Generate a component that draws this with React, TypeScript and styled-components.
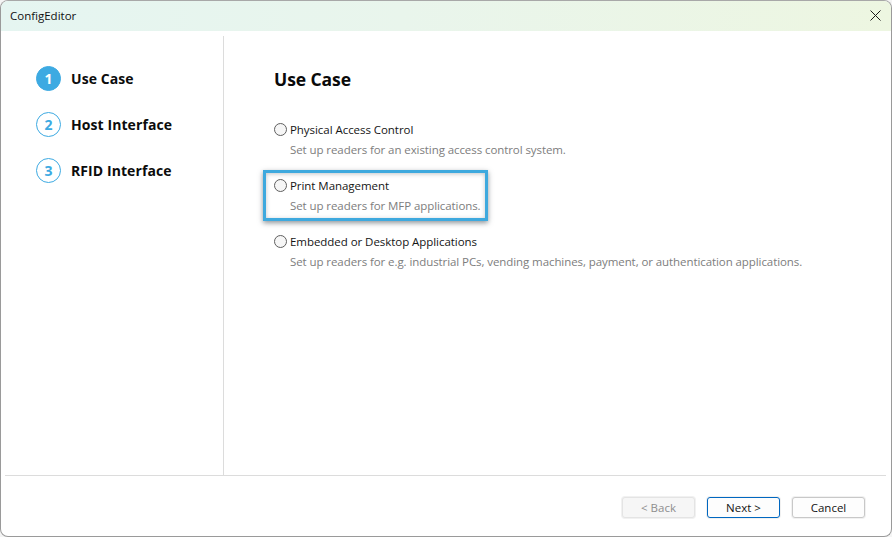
import React from 'react';
import styled, { createGlobalStyle } from 'styled-components';

const GlobalStyle = createGlobalStyle`
  html, body {
    margin: 0;
    padding: 0;
    background: #f4f4f4;
  }
  * {
    box-sizing: border-box;
  }
`;

const Window = styled.div`
  position: relative;
  width: 892px;
  height: 537px;
  display: flex;
  flex-direction: column;
  background: #ffffff;
  border: 1px solid #9a9a9a;
  border-top-color: #a8a8a8;
  border-radius: 8px;
  overflow: hidden;
  font-family: 'Open Sans', 'Noto Sans', sans-serif;
  color: #111111;
`;

const TitleBar = styled.div`
  height: 30px;
  flex: none;
  display: flex;
  align-items: center;
  justify-content: space-between;
  padding: 0 10px 2px 9px;
  background: linear-gradient(90deg, #e5f5f1 0%, #e9f5ec 45%, #edf6e1 100%);
  font-size: 11.5px;
`;

const CloseIcon = styled.svg`
  width: 11px;
  height: 11px;
  display: block;
`;

const Content = styled.div`
  flex: 1;
  display: flex;
  margin: 5px 5px 0 4px;
  min-height: 0;
`;

const Sidebar = styled.nav`
  width: 219px;
  flex: none;
  display: flex;
  flex-direction: column;
  gap: 20px;
  padding: 29px 0 0 31px;
  border-right: 1px solid #dcdcdc;
`;

const Step = styled.div`
  height: 26px;
  display: flex;
  align-items: center;
  gap: 10px;
  font-size: 14px;
  font-weight: 700;
  letter-spacing: 0.08px;
  color: #0c0c0c;
`;

const StepNumber = styled.span<{ $active?: boolean }>`
  width: 25px;
  height: 25px;
  flex: none;
  display: flex;
  align-items: center;
  justify-content: center;
  border-radius: 50%;
  border: 1px solid #3daae2;
  background: ${(p) => (p.$active ? '#3daae2' : '#ffffff')};
  color: ${(p) => (p.$active ? '#ffffff' : '#3daae2')};
  font-size: 14px;
  font-weight: 700;
`;

const Main = styled.main`
  flex: 1;
  padding: 30px 0 0 50px;
`;

const Heading = styled.h1`
  margin: 0 0 27px;
  height: 26px;
  line-height: 26px;
  font-size: 17.5px;
  font-weight: 700;
  letter-spacing: -0.08px;
  color: #0a0a0a;
`;

const OptionList = styled.div`
  display: flex;
  flex-direction: column;
  gap: 16px;
`;

const Option = styled.div`
  position: relative;
  height: 40px;
  display: grid;
  grid-template-columns: 13px 1fr;
  grid-template-rows: 20px 20px;
  column-gap: 3px;
  align-items: center;
`;

const Radio = styled.span`
  width: 13px;
  height: 13px;
  border-radius: 50%;
  border: 1px solid #5f5f5f;
  background: #f6f6f6;
`;

const OptionLabel = styled.span`
  font-size: 11.5px;
  letter-spacing: -0.05px;
  color: #151515;
  white-space: nowrap;
`;

const OptionHint = styled.span`
  grid-column: 2;
  font-size: 11.5px;
  letter-spacing: -0.08px;
  color: #7d7d7d;
  white-space: nowrap;
`;

const Highlight = styled.div`
  position: absolute;
  left: -11px;
  top: -5px;
  width: 225px;
  height: 51px;
  border: 3px solid #3ea9de;
  box-shadow: 0 2px 5px rgba(50, 60, 70, 0.55), inset 0 1px 4px rgba(50, 60, 70, 0.3);
  pointer-events: none;
`;

const Footer = styled.footer`
  flex: none;
  height: 61px;
  margin: 0 5px 0 4px;
  display: flex;
  justify-content: flex-end;
  gap: 12px;
  padding: 21px 21px 0 0;
  border-top: 1px solid #dcdcdc;
`;

const Button = styled.button<{ $primary?: boolean }>`
  width: 73px;
  height: 21px;
  padding: 0;
  border-radius: 3px;
  border: 1px solid ${(p) => (p.$primary ? '#0067c0' : '#c8c8c8')};
  background: #fdfdfd;
  box-shadow: 0 0 0 1px #f1f1f1;
  font-family: inherit;
  font-size: 11.5px;
  color: #141414;

  &:disabled {
    background: #f6f6f6;
    border-color: #e4e4e4;
    color: #8e8e8e;
  }
`;

const steps = ['Use Case', 'Host Interface', 'RFID Interface'];

const options = [
  {
    label: 'Physical Access Control',
    hint: 'Set up readers for an existing access control system.',
  },
  {
    label: 'Print Management',
    hint: 'Set up readers for MFP applications.',
    highlighted: true,
  },
  {
    label: 'Embedded or Desktop Applications',
    hint: 'Set up readers for e.g. industrial PCs, vending machines, payment, or authentication applications.',
  },
];

export default function App() {
  return (
    <>
      <GlobalStyle />
      <Window>
        <TitleBar>
          <span>ConfigEditor</span>
          <CloseIcon viewBox="0 0 11 11" fill="none" stroke="#1a1a1a" strokeWidth="1">
            <path d="M0.5 0.5 L10.5 10.5 M10.5 0.5 L0.5 10.5" />
          </CloseIcon>
        </TitleBar>
        <Content>
          <Sidebar>
            {steps.map((step, i) => (
              <Step key={step}>
                <StepNumber $active={i === 0}>{i + 1}</StepNumber>
                {step}
              </Step>
            ))}
          </Sidebar>
          <Main>
            <Heading>Use Case</Heading>
            <OptionList>
              {options.map((option) => (
                <Option key={option.label}>
                  <Radio />
                  <OptionLabel>{option.label}</OptionLabel>
                  <OptionHint>{option.hint}</OptionHint>
                  {option.highlighted && <Highlight />}
                </Option>
              ))}
            </OptionList>
          </Main>
        </Content>
        <Footer>
          <Button disabled>&lt; Back</Button>
          <Button $primary>Next &gt;</Button>
          <Button>Cancel</Button>
        </Footer>
      </Window>
    </>
  );
}
